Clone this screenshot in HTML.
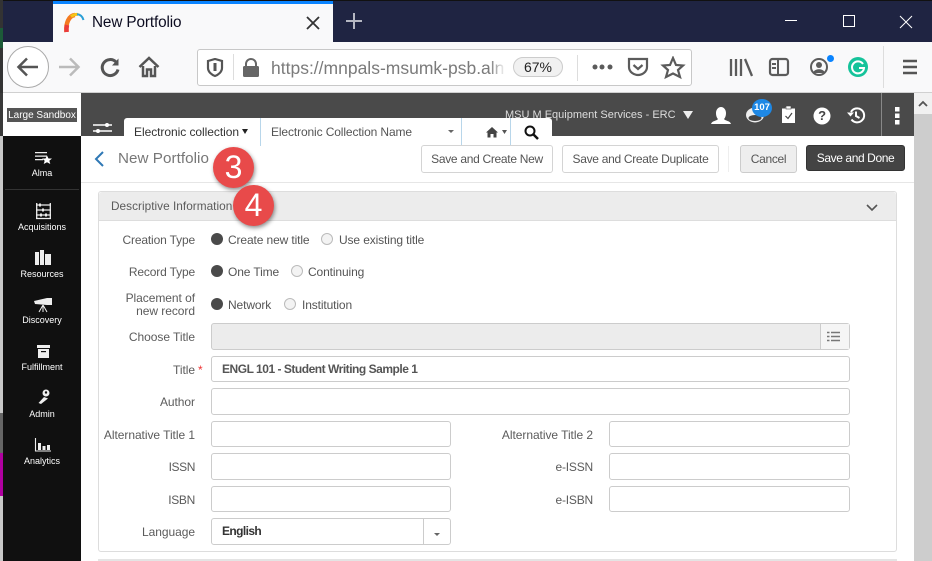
<!DOCTYPE html>
<html><head><meta charset="utf-8"><style>
html,body{margin:0;padding:0;width:932px;height:561px;overflow:hidden;background:#fff}
body{position:relative;font-family:"Liberation Sans",sans-serif;color:#555;font-size:12px}
.a,.l,.t,.i,.b,svg{position:absolute}
.a{display:block}
.t{white-space:nowrap;line-height:14px;letter-spacing:-.12px}
.l{white-space:nowrap;line-height:14px;text-align:right;width:120px;left:75px;color:#5b5b5b;letter-spacing:-.05px}
.i{box-sizing:border-box;background:#fff;border:1px solid #ccc;border-radius:3px}
.b{box-sizing:border-box;background:#fff;border:1px solid #d4d4d4;border-radius:3px;text-align:center;color:#555;height:28px;line-height:26px;top:145px;white-space:nowrap;letter-spacing:-.3px}
.r{position:absolute;width:12px;height:12px;border-radius:50%;box-sizing:border-box}
.on{background:#4a4a4a}
.off{background:#f3f3f3;border:1px solid #bbb}
.n{color:#fff;font-size:9px;text-align:center;width:78px;left:3px;line-height:11px;position:absolute}
.c{position:absolute;border-radius:50%;background:#e84a4a;box-shadow:1px 2px 4px rgba(0,0,0,.45);color:#fff;font-size:32px;text-align:center;width:41px;height:41px;line-height:41px}
</style></head><body>
<!-- browser -->
<div class="a" style="left:0;top:0;width:932px;height:1px;background:#111"></div>
<div class="a" style="left:0;top:1px;width:932px;height:41px;background:#1f2442"></div>
<div class="a" style="left:0;top:0;width:3px;height:95px;background:#333"></div>
<div class="a" style="left:0;top:28px;width:3px;height:20px;background:#1c5a38"></div>
<div class="a" style="left:53px;top:1px;width:280px;height:41px;background:#f9f9fa"></div>
<div class="a" style="left:53px;top:1px;width:280px;height:3px;background:#0a84ff"></div>
<svg style="left:63px;top:12px" width="22" height="22" viewBox="0 0 22 22" fill="none">
<path d="M3.500 20C2.500 11 6 3.500 12 3" stroke="#f47a20" stroke-width="4.500"/>
<path d="M3.500 20C3.300 17 3.500 15 4 13" stroke="#ea3b3b" stroke-width="4.500"/>
<path d="M8 4.500C10 3 13 2 15 2.500" stroke="#f5c518" stroke-width="3"/>
<path d="M14 2.300C17 2.500 19.500 4.500 20.500 8" stroke="#2a9fd6" stroke-width="2"/>
</svg>
<div class="t" style="left:92px;top:14px;font-size:15.300px;line-height:18px;color:#0c0c20">New Portfolio</div>
<svg style="left:305px;top:15px" width="16" height="16" viewBox="0 0 16 16"><path d="M2 2L14 14M14 2L2 14" stroke="#333" stroke-width="1.800"/></svg>
<svg style="left:345px;top:12px" width="18" height="18" viewBox="0 0 18 18"><path d="M9 1V17M1 9H17" stroke="#b5b7c2" stroke-width="2"/></svg>
<svg style="left:785px;top:14px" width="140" height="16" viewBox="0 0 140 16" fill="none" stroke="#fff"><path d="M0 6.500H12"/><rect x="58.500" y="1.500" width="11" height="11"/><path d="M115 2L127 14M127 2L115 14"/></svg>
<div class="a" style="left:3px;top:42px;width:929px;height:51px;background:#f9f9fa"></div>
<div class="a" style="left:3px;top:92px;width:929px;height:1px;background:#d0d0d0"></div>
<div class="a" style="left:7px;top:46px;width:42px;height:42px;box-sizing:border-box;border:1px solid #aaa;border-radius:50%;background:#fff"></div>
<svg style="left:15px;top:54px" width="200" height="26" viewBox="0 0 200 26" fill="none" stroke="#555" stroke-width="2.500">
<path d="M4 13H23M12 4.500L3.500 13L12 21.500"/>
<path d="M44 13H63M55 4.500L63.500 13L55 21.500" stroke="#bbb"/>
<path d="M101 8A8 8 0 1 0 103 15.500" stroke-width="3"/><path d="M103.500 4.500V11.500H97Z" fill="#555" stroke="none"/>
<path d="M124.500 13L134 4L143.500 13M128 12V22H132V15.500H136V22H140V12" stroke-width="2.500"/>
</svg>
<div class="a" style="left:197px;top:49px;width:495px;height:37px;box-sizing:border-box;background:#fff;border:1px solid #c8c8c8;border-radius:3px"></div>
<svg style="left:206px;top:58px" width="56" height="20" viewBox="0 0 56 20" fill="none">
<path d="M2 3L9 1L16 3V10C16 14 12 17 9 18C6 17 2 14 2 10Z" stroke="#555" stroke-width="2.200"/><path d="M9 5V13" stroke="#555" stroke-width="3"/>
<path d="M40 9V6A5 5 0 0 1 50 6V9" stroke="#666" stroke-width="2"/><rect x="37" y="8" width="16" height="11" rx="1.500" fill="#666"/>
</svg>
<div class="a" style="left:233px;top:54px;width:1px;height:26px;background:#ddd"></div>
<div class="a" style="left:271px;top:58px;width:235px;overflow:hidden;white-space:nowrap;font-size:17.500px;line-height:20px;color:#7b7b7b">https://mnpals-msumk-psb.aln</div>
<div class="a" style="left:490px;top:57px;width:16px;height:22px;background:linear-gradient(90deg,rgba(255,255,255,0),#fff)"></div>
<div class="a" style="left:513px;top:57px;width:50px;height:20px;box-sizing:border-box;background:#f1f1f1;border:1px solid #ccc;border-radius:10px;text-align:center;font-size:14px;line-height:18px;color:#222">67%</div>
<div class="a" style="left:577px;top:55px;width:1px;height:26px;background:#ddd"></div>
<svg style="left:590px;top:56px" width="100" height="24" viewBox="0 0 100 24" fill="none" stroke="#5b5b5b">
<circle cx="5" cy="11" r="2.500" fill="#5b5b5b" stroke="none"/><circle cx="12" cy="11" r="2.500" fill="#5b5b5b" stroke="none"/><circle cx="20" cy="11" r="2.500" fill="#5b5b5b" stroke="none"/>
<path d="M39 3H57V11C57 16 52 19 48 19C44 19 39 16 39 11Z" stroke-width="2.200"/><path d="M43.500 9L48 13L52.500 9" stroke-width="2.200"/>
<path d="M83 2L86 9L93 9.500L88 14L90 21L83 17.500L76 21L78 14L73 9.500L80 9Z" stroke-width="2.200"/>
</svg>
<svg style="left:729px;top:56px" width="180" height="24" viewBox="0 0 180 24" fill="none" stroke="#5b5b5b">
<path d="M2 3V20M7 3V20M12 3V20M16 3L23 20" stroke-width="2.300"/>
<rect x="41" y="3" width="18" height="16" rx="2.500" stroke-width="2.200"/><path d="M49 3V19M43 8H47M43 12H47" stroke-width="2"/>
<circle cx="90" cy="11" r="8" stroke-width="2"/><circle cx="90" cy="9" r="3" fill="#5b5b5b" stroke="none"/><path d="M84 17C85 12 95 12 96 17Z" fill="#5b5b5b" stroke="none"/>
<circle cx="129" cy="11" r="10" fill="#15c39a" stroke="none"/><path d="M134 8A6 6 0 1 0 135 12H130" stroke="#fff" stroke-width="2"/>
</svg>
<div class="a" style="left:826px;top:54px;width:9px;height:9px;border-radius:50%;background:#0a84ff;border:1px solid #f9f9fa;box-sizing:border-box"></div>
<div class="a" style="left:883px;top:46px;width:1px;height:42px;background:#ddd"></div>
<svg style="left:902px;top:59px" width="16" height="16" viewBox="0 0 16 16"><path d="M1 2H15M1 8H15M1 14H15" stroke="#555" stroke-width="2.400"/></svg>

<!-- left strip -->
<div class="a" style="left:0;top:93px;width:3px;height:468px;background:#c8c8c8"></div>
<div class="a" style="left:0;top:93px;width:3px;height:43px;background:#3a3a3a"></div>
<div class="a" style="left:0;top:413px;width:3px;height:40px;background:#666"></div>
<div class="a" style="left:0;top:453px;width:3px;height:43px;background:#b000a0"></div>

<!-- app header -->
<div class="a" style="left:81px;top:93px;width:833px;height:43px;background:#4a4a4a"></div>
<div class="a" style="left:3px;top:93px;width:78px;height:43px;background:#fff"></div>
<div class="a" style="left:7px;top:108px;width:70px;height:14px;background:#555;color:#fff;font-size:10px;line-height:15px;text-align:center;white-space:nowrap">Large Sandbox</div>
<div class="a" style="left:3px;top:136px;width:78px;height:425px;background:#101010"></div>
<div class="a" style="left:5px;top:189px;width:74px;height:1px;background:#333"></div>

<svg style="left:93px;top:122px" width="20" height="14" viewBox="0 0 20 14" fill="none"><path d="M0 3H19M0 9H19" stroke="#fff" stroke-width="1.500"/><circle cx="14" cy="3" r="2" fill="#fff"/><circle cx="5" cy="9" r="2" fill="#fff"/></svg>
<div class="t" style="left:505px;top:108px;color:#ddd;font-size:11px;letter-spacing:0">MSU M Equipment Services - ERC</div>
<svg style="left:683px;top:111px" width="10" height="9" viewBox="0 0 10 9"><path d="M0 0H10L5 8Z" fill="#eee"/></svg>
<!-- header icons (absolute page coordinates) -->
<svg style="left:700px;top:95px" width="210" height="40" viewBox="700 95 210 40">
<path d="M721 107C724 107 726 110 726 113C726 116 725 118 724 119C725 121 730 120.500 731 124H711C712 120.500 717 121 718 119C717 118 716 116 716 113C716 110 718 107 721 107Z" fill="#fff"/>
<ellipse cx="755" cy="115" rx="9" ry="7.500" fill="#eee"/><ellipse cx="755" cy="118" rx="6.500" ry="3" fill="#444"/>
<path d="M782 108.500H785.500V107H791V108.500H795V123H782Z" fill="#fff"/><rect x="786" y="106" width="5" height="3" fill="#fff" stroke="#444" stroke-width=".6"/><path d="M785.500 116L788 118.500L792 113" stroke="#444" stroke-width="1.200" fill="none"/>
<circle cx="822" cy="116" r="8.500" fill="#fff"/>
<path d="M851 112A7 7 0 1 1 851.500 119.500M856 111.500V116L859.500 118" stroke="#fff" fill="none" stroke-width="2"/><path d="M848 112.500H855L851.500 116.500Z" fill="#fff" transform="translate(-1,0)"/>
<rect x="895" y="107" width="4.500" height="4.500" fill="#fff"/><rect x="895" y="113.500" width="4.500" height="4.500" fill="#fff"/><rect x="895" y="120" width="4.500" height="4.500" fill="#fff"/>
</svg>
<div class="t" style="left:818px;top:109px;width:8px;text-align:center;color:#444;font-weight:bold;font-size:13px">?</div>
<div class="a" style="left:752px;top:99px;width:20px;height:18px;border-radius:50%;background:#1e88e5;color:#fff;font-size:9.500px;font-weight:bold;line-height:18px;text-align:center">107</div>
<div class="a" style="left:881px;top:93px;width:1px;height:43px;background:#888"></div>

<!-- tabs -->
<div class="a" style="left:124px;top:118px;width:428px;height:28px;background:#fff;border-radius:3px 3px 0 0"></div>
<div class="a" style="left:260px;top:118px;width:1px;height:28px;background:#b8d6ea"></div>
<div class="a" style="left:461px;top:118px;width:1px;height:28px;background:#b8d6ea"></div>
<div class="a" style="left:510px;top:118px;width:1px;height:28px;background:#b8d6ea"></div>
<div class="t" style="left:134px;top:125px;color:#333;font-size:12px;letter-spacing:-.05px">Electronic collection</div>
<svg style="left:242px;top:129px" width="6" height="5" viewBox="0 0 6 5"><path d="M0 0H6L3 5Z" fill="#222"/></svg>
<div class="t" style="left:271px;top:125px;color:#555;font-size:12px">Electronic Collection Name</div>
<svg style="left:448px;top:130px" width="6" height="3" viewBox="0 0 6 3"><path d="M0 0H6L3 3Z" fill="#666"/></svg>
<svg style="left:486px;top:127px" width="22" height="11" viewBox="0 0 22 11"><path d="M6 0L12 5.500H10.500V10.500H7.500V7H4.500V10.500H1.500V5.500H0Z" fill="#444"/><path d="M16 3H21L18.500 7Z" fill="#555"/></svg>
<svg style="left:524px;top:125px" width="15" height="15" viewBox="0 0 15 15" fill="none" stroke="#111"><circle cx="6" cy="6" r="4.500" stroke-width="2"/><path d="M9.500 9.500L14 14" stroke-width="2.500"/></svg>

<!-- sidebar icons (absolute page coordinates) -->
<svg style="left:0;top:0" width="81" height="470" viewBox="0 0 81 470" fill="#eee">
<path d="M35 152H47V153.300H35ZM35 155.500H47V156.800H35ZM35 159H43V160.300H35Z"/><path d="M47 155.500L48.500 158.500H52L49.300 160.700L50.300 164L47 162.200L43.700 164L44.700 160.700L42 158.500H45.500Z" fill="#fff"/>
<path d="M36.700 203V219M50.300 203V219M36 205H51M36 210H51M36 215H51M36 218.500H51" stroke="#eee" stroke-width="1.300" fill="none"/>
<rect x="39" y="203.500" width="2" height="3"/><rect x="42" y="208.500" width="2" height="3"/><rect x="45" y="213.500" width="2" height="3"/><rect x="40" y="213.500" width="2" height="3"/>
<rect x="35" y="252" width="4" height="13"/><rect x="40" y="250" width="4" height="15"/><rect x="45" y="254" width="6" height="11"/>
<path d="M34 301L47 298L52 298V305L47 305L35 304Z"/><path d="M43 305L39 312M43 305L47 312M43 305V312" stroke="#eee" fill="none"/>
<rect x="37" y="345" width="13" height="3"/><path d="M38 349H49V358H38Z"/><rect x="41" y="351" width="5" height="1.200" fill="#101010"/>
<circle cx="46" cy="393" r="3.500"/><circle cx="46" cy="392.500" r="1.200" fill="#101010"/><path d="M44 397L48 398.500L41 404L38.500 403Z"/>
<path d="M35.500 438V451H51" stroke="#eee" fill="none" stroke-width="1.100"/><rect x="38" y="443" width="3" height="7"/><rect x="42.500" y="446" width="3" height="4"/><rect x="47" y="445" width="3" height="5"/>
</svg>
<div class="n" style="top:168px">Alma</div>
<div class="n" style="top:222px">Acquisitions</div>
<div class="n" style="top:269px">Resources</div>
<div class="n" style="top:315px">Discovery</div>
<div class="n" style="top:362px">Fulfillment</div>
<div class="n" style="top:409px">Admin</div>
<div class="n" style="top:456px">Analytics</div>

<!-- page header -->
<svg style="left:94px;top:151px" width="11" height="16" viewBox="0 0 11 16" fill="none"><path d="M9 1L2 8L9 15" stroke="#2f78b5" stroke-width="2"/></svg>
<div class="t" style="left:118px;top:150px;font-size:15.200px;line-height:17px;color:#777;letter-spacing:.05px">New Portfolio</div>
<div class="b" style="left:421px;width:132px">Save and Create New</div>
<div class="b" style="left:562px;width:157px">Save and Create Duplicate</div>
<div class="a" style="left:728px;top:146px;width:1px;height:26px;background:#eee"></div>
<div class="b" style="left:740px;width:57px;background:#eee;border-color:#ccc">Cancel</div>
<div class="b" style="left:806px;width:99px;background:#444;border-color:#333;color:#fff;top:145px;height:26px;line-height:25px;letter-spacing:-.4px">Save and Done</div>
<div class="a" style="left:81px;top:182px;width:833px;height:1px;background:#e6e6e6"></div>

<!-- panel -->
<div class="a" style="left:98px;top:191px;width:799px;height:361px;box-sizing:border-box;border:1px solid #ddd;border-radius:3px;background:#fff"></div>
<div class="a" style="left:99px;top:192px;width:797px;height:29px;background:#ececec;border-bottom:1px solid #ddd;box-sizing:border-box;border-radius:3px 3px 0 0"></div>
<div class="t" style="left:111px;top:199px;color:#5b5b5b;font-size:11.800px;letter-spacing:.03px">Descriptive Information</div>
<svg style="left:866px;top:204px" width="12" height="8" viewBox="0 0 12 8" fill="none"><path d="M1 1L6 6L11 1" stroke="#555" stroke-width="1.600"/></svg>
<div class="a" style="left:98px;top:559px;width:799px;height:2px;background:#e4e4e4"></div>

<!-- callouts -->
<div class="c" style="left:213px;top:147px">3</div>
<div class="c" style="left:233px;top:185px">4</div>

<!-- form -->
<div class="l" style="top:233px;letter-spacing:-.15px">Creation Type</div>
<div class="r on" style="left:211px;top:233px"></div><div class="t" style="left:228px;top:233px">Create new title</div>
<div class="r off" style="left:321px;top:233px"></div><div class="t" style="left:339px;top:233px">Use existing title</div>
<div class="l" style="top:265px;letter-spacing:-.15px">Record Type</div>
<div class="r on" style="left:211px;top:265px"></div><div class="t" style="left:228px;top:265px">One Time</div>
<div class="r off" style="left:291px;top:265px"></div><div class="t" style="left:308px;top:265px">Continuing</div>
<div class="l" style="top:292px;line-height:13px;white-space:normal">Placement of<br>new record</div>
<div class="r on" style="left:211px;top:298px"></div><div class="t" style="left:228px;top:298px">Network</div>
<div class="r off" style="left:284px;top:298px"></div><div class="t" style="left:302px;top:298px">Institution</div>

<div class="l" style="top:330px">Choose Title</div>
<div class="i" style="left:211px;top:323px;width:639px;height:27px;background:#ececec"></div>
<div class="a" style="left:820px;top:324px;width:29px;height:25px;background:#f5f5f5;border-left:1px solid #ccc;box-sizing:border-box"></div>
<svg style="left:827px;top:331px" width="14" height="11" viewBox="0 0 14 11"><path d="M4 1.500H13M4 5.500H13M4 9.500H13" stroke="#777" stroke-width="1.500"/><path d="M0 1.500H2.500M0 5.500H2.500M0 9.500H2.500" stroke="#777" stroke-width="1.500"/></svg>

<div class="l" style="top:363px">Title</div>
<div class="t" style="left:198px;top:363px;color:#e33">*</div>
<div class="i" style="left:211px;top:356px;width:639px;height:26px"></div>
<div class="t" style="left:222px;top:362px;font-weight:bold;color:#555;letter-spacing:-.48px">ENGL 101 - Student Writing Sample 1</div>

<div class="l" style="top:395px">Author</div>
<div class="i" style="left:211px;top:388px;width:639px;height:27px"></div>

<div class="l" style="top:428px">Alternative Title 1</div>
<div class="i" style="left:211px;top:421px;width:240px;height:26px"></div>
<div class="l" style="top:428px;left:473px">Alternative Title 2</div>
<div class="i" style="left:609px;top:421px;width:241px;height:26px"></div>

<div class="l" style="top:460px;letter-spacing:-.4px">ISSN</div>
<div class="i" style="left:211px;top:453px;width:240px;height:27px"></div>
<div class="l" style="top:460px;left:473px;letter-spacing:-.2px">e-ISSN</div>
<div class="i" style="left:609px;top:453px;width:241px;height:27px"></div>

<div class="l" style="top:493px;letter-spacing:-.3px">ISBN</div>
<div class="i" style="left:211px;top:486px;width:240px;height:26px"></div>
<div class="l" style="top:493px;left:473px;letter-spacing:-.2px">e-ISBN</div>
<div class="i" style="left:609px;top:486px;width:241px;height:26px"></div>

<div class="l" style="top:525px">Language</div>
<div class="i" style="left:211px;top:518px;width:240px;height:27px"></div>
<div class="a" style="left:423px;top:519px;width:1px;height:25px;background:#ccc"></div>
<svg style="left:434px;top:533px" width="6" height="3" viewBox="0 0 6 3"><path d="M0 0H6L3 3Z" fill="#666"/></svg>
<div class="t" style="left:222px;top:524px;font-weight:bold;color:#333;letter-spacing:-.6px">English</div>

<!-- scrollbar -->
<div class="a" style="left:914px;top:93px;width:18px;height:468px;background:#cdcdcd"></div>
<div class="a" style="left:914px;top:93px;width:18px;height:21px;background:#f1f1f1"></div>
<svg style="left:918px;top:100px" width="10" height="7" viewBox="0 0 10 7" fill="none"><path d="M1 6L5 2L9 6" stroke="#555" stroke-width="1.800"/></svg>
</body></html>
